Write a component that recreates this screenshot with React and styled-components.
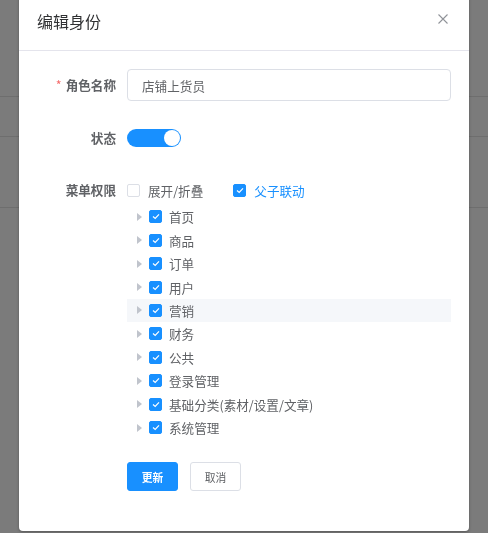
import React from "react";
import styled, { createGlobalStyle } from "styled-components";

const GlobalStyle = createGlobalStyle`
  html, body {
    margin: 0;
    padding: 0;
    background: #7b7b7b;
    font-family: "Noto Sans CJK SC", "Noto Sans", sans-serif;
  }
  * { box-sizing: border-box; }
`;

const Backdrop = styled.div`
  height: 533px;
  background: #7b7b7b;
`;

const BgRow = styled.div`
  height: ${(p) => p.h}px;
  border-bottom: 1px solid #6e6e6e;
`;

const Overlay = styled.div`
  position: fixed;
  inset: 0;
  display: flex;
  justify-content: center;
  align-items: flex-start;
`;

const Dialog = styled.div`
  width: 450px;
  margin-top: -6px;
  background: #fff;
  border-radius: 4px;
  box-shadow: 0 1px 3px rgba(0, 0, 0, 0.3);
`;

const Header = styled.div`
  display: flex;
  justify-content: space-between;
  align-items: flex-start;
  height: 57px;
  padding: 18px 21px 0 18px;
  border-bottom: 1px solid #e4e4ec;
`;

const Title = styled.span`
  font-size: 16px;
  line-height: 18px;
  color: #303133;
`;

const Close = styled.svg`
  margin-top: 2px;
  width: 10px;
  height: 10px;
`;

const Body = styled.div`
  padding: 18px 18px 40px 0;
`;

const FormRow = styled.div`
  display: flex;
  align-items: ${(p) => p.$align || "center"};
  margin-top: ${(p) => p.$mt || 0}px;
`;

const Label = styled.label`
  width: 97px;
  flex: none;
  margin-right: 11px;
  text-align: right;
  font-size: 12.6px;
  font-weight: 700;
  line-height: ${(p) => p.$lh || 18}px;
  color: #606266;
`;

const Required = styled.span`
  color: #f56c6c;
  margin-right: 4px;
  font-weight: 400;
`;

const Input = styled.input`
  flex: 1;
  height: 32px;
  padding: 0 14px;
  border: 1px solid #dcdfe6;
  border-radius: 4px;
  font-family: inherit;
  font-size: 12.6px;
  color: #606266;
  outline: none;
`;

const Switch = styled.span`
  position: relative;
  display: inline-block;
  width: 54px;
  height: 18px;
  border-radius: 9px;
  background: #1890ff;

  &::after {
    content: "";
    position: absolute;
    top: 1px;
    right: 1px;
    width: 16px;
    height: 16px;
    border-radius: 50%;
    background: #fff;
  }
`;

const Control = styled.div`
  flex: 1;
  display: flex;
  flex-direction: column;
`;

const Options = styled.div`
  display: flex;
  align-items: center;
  gap: 30px;
  height: 18px;
`;

const CheckLabel = styled.span`
  display: inline-flex;
  align-items: center;
  gap: 8px;
  font-size: 12.6px;
  color: ${(p) => (p.$active ? "#1890ff" : "#606266")};
`;

const Box = styled.span`
  display: inline-flex;
  align-items: center;
  justify-content: center;
  flex: none;
  width: 13px;
  height: 13px;
  border-radius: 2px;
  border: 1px solid ${(p) => (p.$checked ? "#1890ff" : "#dcdfe6")};
  background: ${(p) => (p.$checked ? "#1890ff" : "#fff")};
`;

const Tree = styled.div`
  margin-top: 6px;
`;

const Node = styled.div`
  display: flex;
  align-items: center;
  height: 23.44px;
  padding-left: 10px;
  background: ${(p) => (p.$hover ? "#f5f7fa" : "transparent")};
  font-size: 12.6px;
  color: #606266;
`;

const Caret = styled.svg`
  width: 5px;
  height: 8px;
  margin-right: 7px;
  flex: none;
`;

const NodeText = styled.span`
  margin-left: 7px;
`;

const Actions = styled.div`
  display: flex;
  gap: 12px;
  margin: 23px 0 0 108px;
`;

const Button = styled.button`
  width: 51px;
  height: 29px;
  padding: 0;
  border-radius: 3px;
  font-family: inherit;
  font-size: 10.8px;
  font-weight: ${(p) => (p.$primary ? 700 : 400)};
  border: 1px solid ${(p) => (p.$primary ? "#1890ff" : "#dcdfe6")};
  background: ${(p) => (p.$primary ? "#1890ff" : "#fff")};
  color: ${(p) => (p.$primary ? "#fff" : "#606266")};
`;

function Check({ checked }) {
  return (
    <Box $checked={checked}>
      {checked && (
        <svg width="8" height="7" viewBox="0 0 8 7">
          <polyline points="1,3.5 3.2,5.5 7,1.3" fill="none" stroke="#fff" strokeWidth="1.2" />
        </svg>
      )}
    </Box>
  );
}

const menus = ["首页", "商品", "订单", "用户", "营销", "财务", "公共", "登录管理", "基础分类(素材/设置/文章)", "系统管理"];

export default function App() {
  return (
    <>
      <GlobalStyle />
      <Backdrop>
        <BgRow h={97} />
        <BgRow h={40} />
        <BgRow h={71} />
      </Backdrop>
      <Overlay>
        <Dialog>
          <Header>
            <Title>编辑身份</Title>
            <Close viewBox="0 0 10 10">
              <path d="M0.5 0.5 L9.5 9.5 M9.5 0.5 L0.5 9.5" stroke="#909399" strokeWidth="1.1" />
            </Close>
          </Header>
          <Body>
            <FormRow>
              <Label $lh={32}>
                <Required>*</Required>角色名称
              </Label>
              <Input defaultValue="店铺上货员" />
            </FormRow>
            <FormRow $mt={28}>
              <Label>状态</Label>
              <Switch />
            </FormRow>
            <FormRow $mt={34} $align="flex-start">
              <Label>菜单权限</Label>
              <Control>
                <Options>
                  <CheckLabel>
                    <Check checked={false} />
                    展开/折叠
                  </CheckLabel>
                  <CheckLabel $active>
                    <Check checked />
                    父子联动
                  </CheckLabel>
                </Options>
                <Tree>
                  {menus.map((m) => (
                    <Node key={m} $hover={m === "营销"}>
                      <Caret viewBox="0 0 5 8">
                        <polygon points="0,0 5,4 0,8" fill="#c0c4cc" />
                      </Caret>
                      <Check checked />
                      <NodeText>{m}</NodeText>
                    </Node>
                  ))}
                </Tree>
              </Control>
            </FormRow>
            <Actions>
              <Button $primary>更新</Button>
              <Button>取消</Button>
            </Actions>
          </Body>
        </Dialog>
      </Overlay>
    </>
  );
}
